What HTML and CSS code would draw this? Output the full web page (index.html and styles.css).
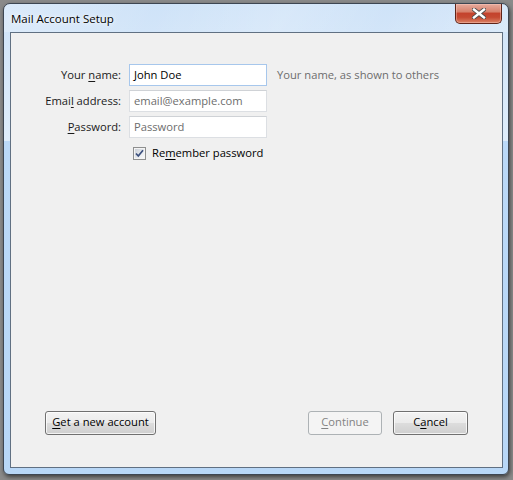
FILE: index.html
```html
<!DOCTYPE html>
<html>
<head>
<meta charset="utf-8">
<title>Mail Account Setup</title>
<link rel="stylesheet" href="styles.css">
</head>
<body>
<div class="window">
  <div class="titlebar">
    <span class="title">Mail Account Setup</span>
    <div class="close">
      <svg width="14" height="11" viewBox="0 0 14 11">
        <path d="M2 1.5 L12 9.5 M12 1.5 L2 9.5" stroke="#4b4b4b" stroke-width="4.2" stroke-linecap="square" fill="none"/>
        <path d="M2 1.5 L12 9.5 M12 1.5 L2 9.5" stroke="#ffffff" stroke-width="2.4" stroke-linecap="square" fill="none"/>
      </svg>
    </div>
  </div>
  <div class="client">
    <div class="form">
      <div class="lbl">Your <u>n</u>ame:</div>
      <div class="field focused">John Doe</div>
      <div class="hint">Your name, as shown to others</div>

      <div class="lbl">Emai<u>l</u> address:</div>
      <div class="field placeholder">email@example.com</div>
      <div></div>

      <div class="lbl"><u>P</u>assword:</div>
      <div class="field placeholder">Password</div>
      <div></div>

      <div class="checkrow">
        <span class="check">
          <svg width="11" height="11" viewBox="0 0 11 11">
            <path d="M2 5.5 L4.3 8 L9 2.3" stroke="#3b4f7d" stroke-width="1.7" fill="none"/>
          </svg>
        </span>
        <span class="checklabel">Re<u>m</u>ember password</span>
      </div>
    </div>
    <div class="actions">
      <button class="btn btn-get"><u>G</u>et a new account</button>
      <div class="spacer"></div>
      <button class="btn btn-continue" disabled><u>C</u>ontinue</button>
      <button class="btn btn-cancel">C<u>a</u>ncel</button>
    </div>
  </div>
</div>
</body>
</html>
```

FILE: styles.css
```css
html, body {
  margin: 0;
  padding: 0;
}

body {
  width: 513px;
  height: 480px;
  overflow: hidden;
  background: #8a8a8a;
  font-family: "Open Sans", "Noto Sans", sans-serif;
  font-size: 11.2px;
  color: #1a1a1a;
}

.window {
  margin: 3px 0 0 3px;
  width: 506px;
  height: 472px;
  box-sizing: border-box;
  border: 1px solid #3d4652;
  border-radius: 7px 7px 6px 6px;
  background:
    linear-gradient(to bottom, #cfe3f8 0px, #dfedfb 137px, #bbd9f8 137px, #b8d7f7 100%);
  box-shadow: 1px 2px 4px rgba(0, 0, 0, 0.55);
  display: flex;
  flex-direction: column;
  padding: 0 5px 6px 6px;
}

.titlebar {
  height: 28px;
  flex: none;
  display: flex;
  align-items: flex-start;
  margin: 0 -5px 0 -6px;
  padding: 0 6px 0 7px;
  border-radius: 6px 6px 0 0;
  background:
    linear-gradient(115deg, rgba(255,255,255,0.25) 0%, rgba(255,255,255,0) 30%, rgba(255,255,255,0.18) 55%, rgba(255,255,255,0) 75%, rgba(255,255,255,0.2) 100%);
}

.title {
  align-self: center;
  font-size: 11.5px;
  color: #000;
  text-shadow: 0 0 6px rgba(255, 255, 255, 0.95), 0 0 2px rgba(255, 255, 255, 0.9);
  margin-top: 1px;
}

.close {
  margin-left: auto;
  width: 47px;
  height: 20px;
  box-sizing: border-box;
  border: 1px solid #5f2419;
  border-top: none;
  border-radius: 0 0 5px 5px;
  background: linear-gradient(to bottom, #e6ab9d 0%, #d7826d 40%, #c4432d 50%, #c54a32 70%, #db8366 100%);
  box-shadow: inset 0 0 0 1px rgba(255, 210, 200, 0.4);
  display: flex;
  align-items: center;
  justify-content: center;
}

.client {
  flex: 1;
  border: 1px solid #607082;
  background: #f0f0f0;
  display: flex;
  flex-direction: column;
}

.form {
  display: grid;
  grid-template-columns: 90px 138px auto;
  grid-auto-rows: 22px;
  column-gap: 8px;
  row-gap: 4px;
  padding: 31px 0 0 20px;
}

.lbl {
  text-align: right;
  align-self: center;
  color: #1a1a1a;
  white-space: nowrap;
  margin-top: -2px;
}

.field {
  box-sizing: border-box;
  height: 22px;
  border: 1px solid #dcdfe3;
  border-top-color: #cfd2d6;
  background: #fff;
  padding: 0 4px 2px 4px;
  display: flex;
  align-items: center;
  color: #000;
  white-space: nowrap;
}

.field.focused {
  border-color: #a7c7ec;
}

.field.placeholder {
  color: #6d6d6d;
}

.hint {
  align-self: center;
  padding-left: 2px;
  color: #6d6d6d;
  white-space: nowrap;
  margin-top: -2px;
}

.checkrow {
  grid-column: 2 / span 2;
  display: flex;
  align-items: center;
  gap: 6px;
  padding-left: 4px;
  color: #000;
}

.checklabel {
  margin-top: -2px;
}

.check {
  width: 13px;
  height: 13px;
  box-sizing: border-box;
  border: 1px solid #8e8f8f;
  background: linear-gradient(135deg, #c6ccd4 0%, #eef0f3 70%, #fafafa 100%);
  box-shadow: inset 0 0 0 1px #f4f4f4;
  display: flex;
  align-items: center;
  justify-content: center;
}

.check svg {
  display: block;
}

u {
  text-decoration: underline;
  text-underline-offset: 2px;
}

.actions {
  margin-top: auto;
  display: flex;
  align-items: center;
  gap: 11px;
  padding: 0 34px 32px 34px;
}

.spacer {
  flex: 1;
}

.btn {
  height: 24px;
  box-sizing: border-box;
  border: 1px solid #707070;
  border-radius: 3px;
  background: linear-gradient(to bottom, #f3f3f3 0%, #ebebeb 48%, #dddddd 50%, #cfcfcf 100%);
  box-shadow: inset 0 0 0 1px rgba(255, 255, 255, 0.75);
  font-family: inherit;
  font-size: 11.2px;
  color: #000;
  padding: 0 0 3px 0;
  margin: 0;
}

.btn-get {
  width: 111px;
}

.btn-continue {
  width: 74px;
  border-color: #adb2b5;
  background: #f4f4f4;
  box-shadow: none;
  color: #838383;
}

.btn-cancel {
  width: 75px;
}
```
